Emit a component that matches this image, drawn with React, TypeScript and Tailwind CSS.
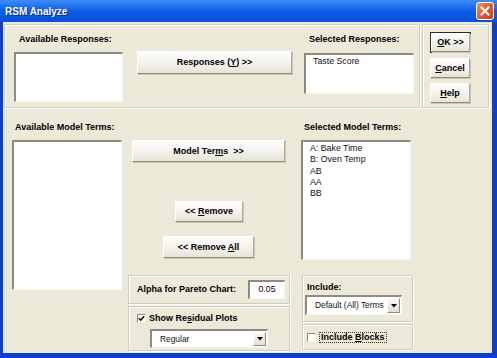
import React from "react";

const Btn = ({ children, className = "", def = false }: { children: React.ReactNode; className?: string; def?: boolean }) => (
  <div className={`${def ? "border border-[#2b2b2b] p-0" : ""} ${className}`}>
    <div className="w-full h-full flex items-center justify-center bg-gradient-to-b from-[#fdfdfb] via-[#f4f3ee] to-[#e6e3d6] border border-t-white border-l-white border-r-[#aeab9d] border-b-[#8f8c7e] shadow-[1px_1px_0_#c9c6b8] text-[9px] font-bold text-black leading-none">
      {children}
    </div>
  </div>
);

const ListBox = ({ className = "", items = [] as string[] }) => (
  <div className={`bg-white border-t-2 border-l-2 border-b border-r border-t-[#8e8c80] border-l-[#8e8c80] border-b-[#f6f5f0] border-r-[#f6f5f0] pt-[1px] pl-[7px] text-[8.8px] leading-[11.3px] text-[#111] ${className}`}>
    {items.map((t) => (
      <div key={t}>{t}</div>
    ))}
  </div>
);

const Frame = ({ children, className = "" }: { children?: React.ReactNode; className?: string }) => (
  <div className={`border border-[#d0cebf] shadow-[inset_1px_1px_0_#ffffff,1px_1px_0_#ffffff] ${className}`}>{children}</div>
);

const Arrow = () => (
  <div className="w-[13px] h-full bg-gradient-to-b from-[#f8f7f2] to-[#e3e0d2] border border-t-white border-l-white border-r-[#8f8c7e] border-b-[#8f8c7e] flex items-center justify-center">
    <svg width="6" height="4" viewBox="0 0 6 4">
      <path d="M0 0 H6 L3 3.5 Z" fill="#000" />
    </svg>
  </div>
);

const Dropdown = ({ text, className = "" }: { text: string; className?: string }) => (
  <div className={`bg-white border-t-2 border-l-2 border-b border-r border-t-[#8e8c80] border-l-[#8e8c80] border-b-[#f6f5f0] border-r-[#f6f5f0] flex items-stretch ${className}`}>
    <div className="flex-1 flex items-center pl-[8px] text-[8.4px] text-[#111] whitespace-nowrap overflow-hidden">{text}</div>
    <div className="py-[1px] pr-[1px]">
      <Arrow />
    </div>
  </div>
);

const CheckBox = ({ checked }: { checked?: boolean }) => (
  <div className="w-[9px] h-[9px] bg-white border-t border-l border-t-[#8e8c80] border-l-[#8e8c80] border-b border-r border-b-[#f6f5f0] border-r-[#f6f5f0] flex items-center justify-center">
    {checked && (
      <svg width="7" height="7" viewBox="0 0 7 7">
        <path d="M0.8 3.2 L2.7 5.2 L6.2 1.2" stroke="#000" strokeWidth="1.5" fill="none" />
      </svg>
    )}
  </div>
);

export default function App() {
  return (
    <div className="w-[497px] h-[358px] bg-[#0a3fd0] flex flex-col overflow-hidden font-['Liberation_Sans',Arial,sans-serif] text-black">
      {/* Title bar */}
      <div className="h-[22px] shrink-0 bg-gradient-to-b from-[#3d8cf6] via-[#0a5ce8] to-[#0a4fd4] flex items-center justify-between pl-[5px] pr-[3px]">
        <span className="text-white font-bold text-[10px] [text-shadow:1px_1px_0_#0a2a8a]">RSM Analyze</span>
        <div className="w-[18px] h-[18px] rounded-[3px] border border-white bg-gradient-to-br from-[#f0906a] via-[#e25a30] to-[#c8401c] flex items-center justify-center">
          <svg width="10" height="10" viewBox="0 0 10 10">
            <path d="M1.5 1.5 L8.5 8.5 M8.5 1.5 L1.5 8.5" stroke="#fff" strokeWidth="2" strokeLinecap="square" />
          </svg>
        </div>
      </div>
      {/* Client */}
      <div className="ml-[3px] mr-[5px] h-[331px] bg-[#ece9d8] flex flex-col">
        {/* Top row */}
        <div className="mt-[2px] h-[84px] flex">
          <Frame className="ml-[1px] w-[416px] h-full flex items-start">
            <div className="ml-[9px] mt-[8px] flex flex-col">
              <div className="h-[12px] pl-[5px] text-[9px] font-bold leading-[12px] whitespace-nowrap">Available Responses:</div>
              <ListBox className="mt-[7px] w-[109px] h-[50px]" />
            </div>
            <Btn className="ml-[14px] mt-[26px] w-[155px] h-[23px]">
              <span>
                Responses (<u>Y</u>) &gt;&gt;
              </span>
            </Btn>
            <div className="ml-[12px] mt-[8px] flex flex-col">
              <div className="h-[12px] pl-[5px] text-[9px] font-bold leading-[12px] whitespace-nowrap">Selected Responses:</div>
              <ListBox className="mt-[8px] w-[110px] h-[41px]" items={["Taste Score"]} />
            </div>
          </Frame>
          <Frame className="ml-[2px] w-[67px] h-full flex flex-col pl-[7px] pt-[7px] gap-[5px]">
            <Btn def className="w-[41px] h-[21px]">
              <span>
                <u>O</u>K &gt;&gt;
              </span>
            </Btn>
            <Btn className="w-[40px] h-[20px]">
              <span>
                <u>C</u>ancel
              </span>
            </Btn>
            <Btn className="w-[40px] h-[20px]">
              <span>
                <u>H</u>elp
              </span>
            </Btn>
          </Frame>
        </div>
        {/* Middle / bottom */}
        <div className="flex items-start">
          <div className="ml-[9px] w-[110px] flex flex-col">
            <div className="mt-[13px] h-[12px] pl-[3px] text-[9px] font-bold leading-[12px] whitespace-nowrap">Available Model Terms:</div>
            <ListBox className="mt-[7px] h-[150px]" />
          </div>
          <div className="ml-[6px] w-[162px] flex flex-col items-start">
            <Btn className="mt-[32px] ml-[4px] w-[153px] h-[22px]">
              <span className="whitespace-pre">
                Model Ter<u>m</u>s  &gt;&gt;
              </span>
            </Btn>
            <Btn className="mt-[39px] ml-[47px] w-[68px] h-[21px]">
              <span>
                &lt;&lt; <u>R</u>emove
              </span>
            </Btn>
            <Btn className="mt-[14px] ml-[35px] w-[91px] h-[22px]">
              <span>
                &lt;&lt; Remove <u>A</u>ll
              </span>
            </Btn>
            <Frame className="mt-[17px] w-[162px] h-[29px] flex items-center">
              <span className="ml-[8px] text-[9px] font-bold whitespace-nowrap">Alpha for Pareto Chart:</span>
              <div className="ml-auto mr-[4px] w-[37px] h-[19px] bg-white border-t-2 border-l-2 border-b border-r border-t-[#8e8c80] border-l-[#8e8c80] border-b-[#f6f5f0] border-r-[#f6f5f0] flex items-center justify-center text-[8.8px]">
                0.05
              </div>
            </Frame>
            <Frame className="mt-[2px] w-[162px] h-[45px] flex flex-col">
              <div className="mt-[6px] ml-[8px] flex items-center gap-[3px]">
                <CheckBox checked />
                <span className="text-[9px] font-bold leading-[11px]">
                  Show Re<u>s</u>idual Plots
                </span>
              </div>
              <Dropdown text="Regular" className="mt-[5px] ml-[21px] w-[118px] h-[19px]" />
            </Frame>
          </div>
          <div className="ml-[11px] w-[112px] flex flex-col">
            <div className="mt-[13px] h-[12px] pl-[3px] text-[9px] font-bold leading-[12px] whitespace-nowrap">Selected Model Terms:</div>
            <ListBox className="mt-[7px] w-[110px] h-[120px]" items={["A: Bake Time", "B: Oven Temp", "AB", "AA", "BB"]} />
            <Frame className="mt-[15px] ml-[1px] w-[111px] h-[47px] flex flex-col">
              <div className="mt-[5px] ml-[4px] text-[9px] font-bold leading-[12px]">Include:</div>
              <Dropdown text="Default (All) Terms" className="mt-[2px] ml-[2px] w-[97px] h-[20px]" />
            </Frame>
            <Frame className="mt-[2px] ml-[1px] w-[111px] h-[26px] flex items-center">
              <div className="ml-[4px]">
                <CheckBox />
              </div>
              <span className="ml-[3px] px-[1px] border border-dotted border-[#333] text-[9px] font-bold leading-[9px]">
                Include <u>B</u>locks
              </span>
            </Frame>
          </div>
        </div>
      </div>
    </div>
  );
}
